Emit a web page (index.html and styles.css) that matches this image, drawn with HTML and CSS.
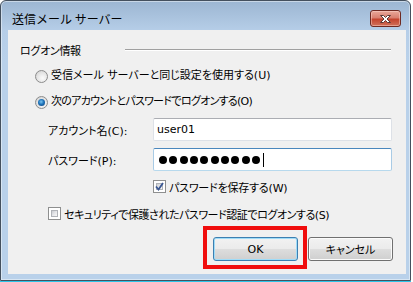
FILE: index.html
```html
<!DOCTYPE html>
<html lang="ja">
<head>
<meta charset="utf-8">
<title>送信メール サーバー</title>
<link rel="stylesheet" href="styles.css">
</head>
<body>
<div class="window">
  <div class="titlebar">
    <span class="title">送信メール サーバー</span>
    <span class="close">
      <svg width="13" height="10" viewBox="0 0 13 10">
        <path d="M1.5 1.5 L4.5 1.5 L6.5 3.5 L8.5 1.5 L11.5 1.5 L8 5 L11.5 8.5 L8.5 8.5 L6.5 6.5 L4.5 8.5 L1.5 8.5 L5 5 Z" fill="#ffffff" stroke="#5a3a36" stroke-width="1" stroke-linejoin="round"/>
      </svg>
    </span>
  </div>
  <div class="client">
    <div class="group-head">
      <span class="group-label">ログオン情報</span>
      <span class="group-line"></span>
    </div>
    <div class="option opt-1">
      <span class="radio"></span>
      <span class="txt txt-r1">受信メール サーバーと同じ設定を使用する(U)</span>
    </div>
    <div class="option opt-2">
      <span class="radio checked"><span class="dot-in"></span></span>
      <span class="txt txt-r2">次のアカウントとパスワードでログオンする(O)</span>
    </div>
    <div class="field field-1">
      <span class="flabel">アカウント名(C):</span>
      <div class="input">user01</div>
    </div>
    <div class="field field-2">
      <span class="flabel">パスワード(P):</span>
      <div class="input focused">
        <span class="pw"><i></i><i></i><i></i><i></i><i></i><i></i><i></i><i></i><i></i><i></i></span>
        <span class="caret"></span>
      </div>
    </div>
    <div class="check-row check-1">
      <span class="check">
        <svg width="9" height="9" viewBox="0 0 9 9"><path d="M1 4.5 L3.5 7.5 L8 1" fill="none" stroke="#3a5793" stroke-width="1.8"/></svg>
      </span>
      <span class="txt txt-c1">パスワードを保存する(W)</span>
    </div>
    <div class="check-row check-2">
      <span class="check"></span>
      <span class="txt txt-c2">セキュリティで保護されたパスワード認証でログオンする(S)</span>
    </div>
    <div class="buttons">
      <div class="ok-wrap">
        <span class="btn default">OK</span>
        <span class="annot"></span>
      </div>
      <span class="btn">キャンセル</span>
    </div>
  </div>
</div>
</body>
</html>
```
FILE: styles.css
```css
html, body {
  margin: 0;
  padding: 0;
  background: #ffffff;
}
body {
  width: 413px;
  height: 282px;
  overflow: hidden;
  font-family: "DejaVu Sans", "Noto Sans CJK JP", sans-serif;
  font-size: 11px;
  font-feature-settings: "palt" 1;
  color: #000;
}
.window {
  box-sizing: border-box;
  width: 411px;
  height: 281px;
  border: 1px solid #44505e;
  border-radius: 6px 6px 0 0;
  background: linear-gradient(to bottom, #9cb6d2 0px, #b6cee8 30px, #b9d1ea 60px, #b9d1ea 100%);
  box-shadow: inset 0 0 0 1px rgba(255,255,255,0.45), 0 1px 0 #2cc4e8;
  padding: 0 4px 6px 7px;
  display: flex;
  flex-direction: column;
}
.titlebar {
  height: 29px;
  display: flex;
  justify-content: space-between;
  align-items: flex-start;
  padding: 0 5px 0 4px;
}
.title {
  font-family: "Noto Sans CJK JP", sans-serif;
  font-feature-settings: normal;
  font-size: 12px;
  line-height: 16px;
  margin-top: 10px;
  color: #000;
}
.close {
  margin-top: 9px;
  box-sizing: border-box;
  width: 31px;
  height: 17px;
  border: 1px solid #6e2a22;
  border-radius: 3px;
  background: linear-gradient(to bottom, #e9a89a 0%, #d98070 45%, #c4442e 55%, #d0705a 100%);
  box-shadow: inset 0 0 0 1px rgba(255,220,210,0.45);
  display: flex;
  align-items: center;
  justify-content: center;
}
.client {
  flex: 1;
  background: #f0f0f0;
  padding: 14px 13px 0 12px;
  display: flex;
  flex-direction: column;
}
.group-head {
  height: 16px;
  display: flex;
  align-items: flex-start;
}
.group-label {
  width: 105px;
  line-height: 16px;
  letter-spacing: -0.3px;
}
.group-line {
  flex: 1;
  margin: 5px 2px 0 0;
  height: 1px;
  background: #a0a0a0;
  box-shadow: 0 1px 0 #ffffff;
}
.option {
  display: flex;
  align-items: center;
  height: 16px;
  margin-left: 15px;
  gap: 3px;
  line-height: 16px;
}
.opt-1 { margin-top: 8px; }
.opt-2 { margin-top: 10px; }
.txt-r2 { letter-spacing: -0.7px; }
.txt-c1 { letter-spacing: -0.2px; }
.txt-c2 { letter-spacing: -0.45px; }
.radio {
  box-sizing: border-box;
  width: 13px;
  height: 13px;
  border-radius: 50%;
  border: 1px solid #8c8c8c;
  background: radial-gradient(circle at 60% 65%, #fbfbfb 0%, #e4e4e4 55%, #c8c8c8 100%);
  display: flex;
  align-items: center;
  justify-content: center;
}
.dot-in {
  width: 7px;
  height: 7px;
  border-radius: 50%;
  background: radial-gradient(circle at 45% 40%, #7cc6f2 0%, #1f74ba 45%, #0f3c72 100%);
}
.field {
  display: flex;
  align-items: center;
  margin-left: 28px;
  height: 23px;
}
.field-1 { margin-top: 8px; }
.field-2 { margin-top: 7px; }
.flabel {
  width: 105px;
}
.input {
  box-sizing: border-box;
  width: 239px;
  height: 23px;
  background: #fff;
  border: 1px solid #dde1e7;
  border-top-color: #abadb3;
  border-radius: 2px;
  padding-left: 3px;
  line-height: 21px;
  display: flex;
  align-items: center;
}
.input.focused {
  border-color: #a9cbe5;
  border-top-color: #4a87bd;
  border-bottom-color: #b7d9ed;
  padding-left: 5px;
}
.pw {
  display: flex;
  gap: 2.33px;
}
.pw i {
  display: block;
  width: 8px;
  height: 8px;
  border-radius: 50%;
  background: #000;
}
.caret {
  width: 1px;
  height: 14px;
  background: #000;
  margin-left: 3px;
}
.check-row {
  display: flex;
  align-items: center;
  height: 13px;
  gap: 3px;
}
.check-1 { margin-top: 9px; margin-left: 133px; }
.check-2 { margin-top: 14px; margin-left: 28px; }
.check {
  box-sizing: border-box;
  width: 13px;
  height: 13px;
  border: 1px solid #8e8f8f;
  background: #fff;
  display: flex;
  align-items: center;
  justify-content: center;
  position: relative;
}
.check::before {
  content: "";
  position: absolute;
  inset: 2px;
  background: linear-gradient(135deg, #c9ccd1 0%, #e6e7ea 50%, #f7f7f7 100%);
  border: 1px solid #b0b3b8;
  box-sizing: border-box;
}
.check svg {
  position: relative;
}
.buttons {
  margin-top: 17px;
  display: flex;
  justify-content: flex-end;
  gap: 10px;
}
.ok-wrap {
  position: relative;
}
.btn {
  box-sizing: border-box;
  width: 85px;
  height: 24px;
  border: 1px solid #707070;
  border-radius: 3px;
  background: linear-gradient(to bottom, #f2f2f2 0%, #ebebeb 48%, #dddddd 52%, #cfcfcf 100%);
  box-shadow: inset 0 0 0 1px #fbfbfb;
  display: flex;
  align-items: center;
  justify-content: center;
}
.btn.default {
  border-color: #3c7fb1;
  box-shadow: inset 0 0 0 1px #9fdcf8;
}
.annot {
  position: absolute;
  left: -10px;
  top: -11px;
  width: 104px;
  height: 43px;
  box-sizing: border-box;
  border: 4px solid #f00d0d;
}
```
